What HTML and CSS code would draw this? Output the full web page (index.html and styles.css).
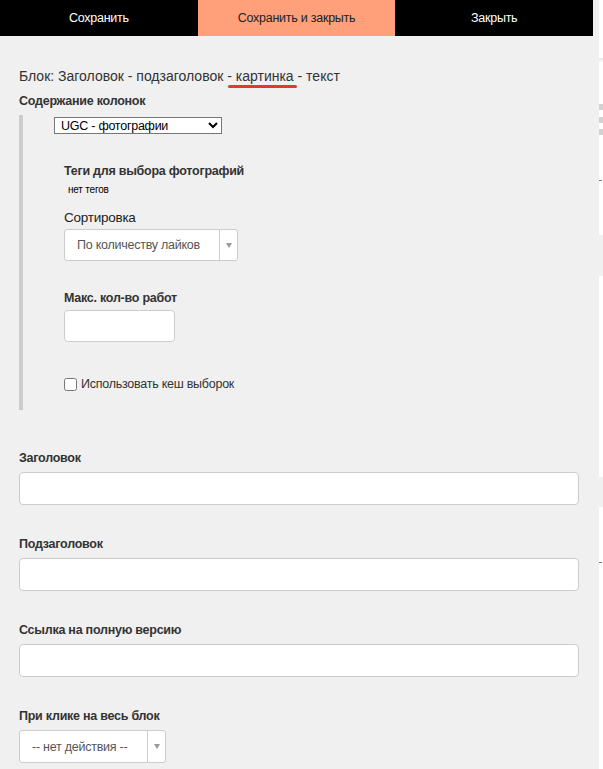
FILE: index.html
```html
<!DOCTYPE html>
<html lang="ru">
<head>
    <meta charset="UTF-8">
    <meta name="viewport" content="width=device-width, initial-scale=1.0">
    <title>Редактирование блока</title>
    <link rel="stylesheet" href="styles.css">
</head>
<body>
    <div class="page">
        <div class="editor">
            <div class="toolbar">
                <button class="tool-btn">Сохранить</button>
                <button class="tool-btn tool-btn-accent">Сохранить и закрыть</button>
                <button class="tool-btn">Закрыть</button>
            </div>

            <div class="form">
                <h2 class="block-title">Блок: Заголовок - подзаголовок <span class="marked">- картинка</span> - текст</h2>

                <div class="label">Содержание колонок</div>
                <div class="columns">
                    <select class="native-select">
                        <option>UGC - фотографии</option>
                    </select>

                    <div class="sub">
                        <div class="label sub-first">Теги для выбора фотографий</div>
                        <div class="tags-empty">нет тегов</div>

                        <div class="label label-plain sort-label">Сортировка</div>
                        <div class="fake-select sort-select">
                            <span class="fake-select-value">По количеству лайков</span>
                            <span class="fake-select-arrow"></span>
                        </div>

                        <div class="label max-label">Макс. кол-во работ</div>
                        <input type="text" class="field field-small">

                        <label class="check-row">
                            <input type="checkbox" class="check">
                            Использовать кеш выборок
                        </label>
                    </div>
                </div>

                <div class="group group-first">
                    <div class="label">Заголовок</div>
                    <input type="text" class="field">
                </div>

                <div class="group">
                    <div class="label">Подзаголовок</div>
                    <input type="text" class="field">
                </div>

                <div class="group">
                    <div class="label">Ссылка на полную версию</div>
                    <input type="text" class="field">
                </div>

                <div class="group">
                    <div class="label">При клике на весь блок</div>
                    <div class="fake-select click-select">
                        <span class="fake-select-value">-- нет действия --</span>
                        <span class="fake-select-arrow"></span>
                    </div>
                </div>
            </div>
        </div>

        <!-- edge of the page behind the editor -->
        <div class="backdrop">
            <div class="bd-line bd-1"></div>
            <div class="bd-mark bd-2"></div>
            <div class="bd-mark bd-3"></div>
            <div class="bd-mark bd-4"></div>
            <div class="bd-dash bd-5"></div>
            <div class="bd-area bd-6"></div>
            <div class="bd-area bd-7"></div>
            <div class="bd-dash bd-8"></div>
        </div>
    </div>
</body>
</html>
```

FILE: styles.css
```css
body {
    margin: 0;
    font-family: "Liberation Sans", Arial, sans-serif;
    font-size: 12.5px;
    letter-spacing: -0.25px;
    color: #333;
    background-color: #fff;
}

.page {
    display: flex;
    min-height: 769px;
}

.editor {
    width: 599px;
    background-color: #f0f0f0;
}

/* toolbar */

.toolbar {
    display: flex;
    width: 593px;
    height: 36px;
    background-color: #000;
}

.tool-btn {
    flex: 1;
    border: none;
    background-color: #000;
    color: #fff;
    font-family: inherit;
    font-size: 12.5px;
    letter-spacing: -0.25px;
    padding: 0;
    cursor: pointer;
}

.tool-btn-accent {
    background-color: #ffa07a;
    color: #222;
}

/* form */

.form {
    padding: 0 20px 0 19px;
}

.block-title {
    margin: 31px 0 0;
    font-size: 14px;
    font-weight: normal;
    letter-spacing: 0;
    line-height: 18px;
    color: #333;
}

.marked {
    position: relative;
}

.marked::after {
    content: "";
    position: absolute;
    left: 1px;
    right: -3px;
    bottom: -4px;
    height: 3px;
    border-radius: 2px;
    background-color: #e2392f;
}

.label {
    font-size: 12.5px;
    font-weight: bold;
    line-height: 16px;
    color: #333;
}

.label-plain {
    font-weight: normal;
    font-size: 13.5px;
    color: #222;
}

.block-title + .label {
    margin-top: 8px;
}

.columns {
    margin-top: 6px;
    padding: 2px 0 18px 31px;
    border-left: 4px solid #ccc;
}

.native-select {
    display: block;
    width: 168px;
    height: 17px;
    margin: 0;
    padding: 0 0 0 2px;
    font-family: inherit;
    font-size: 12.5px;
    letter-spacing: -0.25px;
    color: #000;
    background-color: #fff;
    border: 1px solid #767676;
    border-radius: 0;
}

.sub {
    padding-left: 10px;
}

.sub-first {
    margin-top: 29px;
}

.tags-empty {
    margin: 5px 0 0 4px;
    font-size: 10px;
    letter-spacing: -0.2px;
    line-height: 12px;
    color: #000;
}

.sort-label {
    margin-top: 14px;
}

.fake-select {
    display: flex;
    align-items: center;
    box-sizing: border-box;
    height: 32px;
    background-color: #fff;
    border: 1px solid #ccc;
    border-radius: 3px;
}

.fake-select-value {
    flex: 1;
    padding-left: 12px;
    color: #555;
    font-size: 12.5px;
}

.fake-select-arrow {
    position: relative;
    width: 17px;
    align-self: stretch;
    border-left: 1px solid #ccc;
}

.fake-select-arrow::after {
    content: "";
    position: absolute;
    left: 6px;
    top: 13px;
    border-left: 3px solid transparent;
    border-right: 3px solid transparent;
    border-top: 5px solid #999;
}

.sort-select {
    width: 174px;
    margin-top: 3px;
}

.max-label {
    margin-top: 29px;
}

.field {
    display: block;
    box-sizing: border-box;
    width: 100%;
    height: 33px;
    margin: 6px 0 0;
    padding: 0 10px;
    background-color: #fff;
    border: 1px solid #ccc;
    border-radius: 4px;
    font-family: inherit;
    font-size: 13px;
}

.field-small {
    width: 111px;
    height: 32px;
    margin-top: 4px;
}

.check-row {
    display: flex;
    align-items: center;
    margin-top: 34px;
    line-height: 16px;
    font-size: 12.5px;
    color: #333;
}

.check {
    width: 13px;
    height: 13px;
    margin: 0 4px 0 0;
}

.group {
    margin-top: 31px;
}

.group-first {
    margin-top: 40px;
}

.click-select {
    width: 147px;
    height: 33px;
    margin-top: 6px;
}

/* the page under the editor */

.backdrop {
    width: 4px;
    background-color: #fff;
}

.bd-line {
    height: 4px;
    background: linear-gradient(#e6e6e6, #fafafa);
}

.bd-mark {
    height: 6px;
    background-color: #d2d2d2;
}

.bd-dash {
    width: 3px;
    height: 1px;
    background-color: #777;
}

.bd-area {
    background-color: #f0f0f0;
}

.bd-1 { margin-top: 58px; }
.bd-2 { margin-top: 42px; }
.bd-3 { margin-top: 7px; }
.bd-4 { margin-top: 6px; }
.bd-5 { margin-top: 45px; }
.bd-6 { margin-top: 54px; height: 41px; }
.bd-7 { margin-top: 201px; height: 30px; }
.bd-8 { margin-top: 55px; }
```
